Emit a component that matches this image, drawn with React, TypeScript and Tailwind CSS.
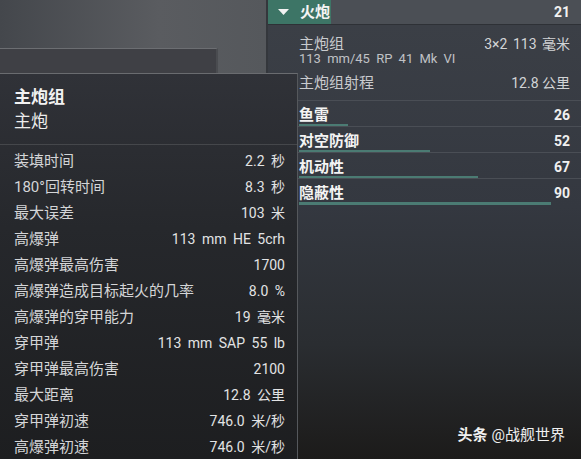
import React from "react";

const rows: [string, string][] = [
  ["装填时间", "2.2 秒"],
  ["180°回转时间", "8.3 秒"],
  ["最大误差", "103 米"],
  ["高爆弹", "113 mm HE 5crh"],
  ["高爆弹最高伤害", "1700"],
  ["高爆弹造成目标起火的几率", "8.0 %"],
  ["高爆弹的穿甲能力", "19 毫米"],
  ["穿甲弹", "113 mm SAP 55 lb"],
  ["穿甲弹最高伤害", "2100"],
  ["最大距离", "12.8 公里"],
  ["穿甲弹初速", "746.0 米/秒"],
  ["高爆弹初速", "746.0 米/秒"],
];

const stats: [string, string, number][] = [
  ["鱼雷", "26", 49],
  ["对空防御", "52", 131],
  ["机动性", "67", 179],
  ["隐蔽性", "90", 252],
];

export default function App() {
  return (
    <div className="relative flex h-[459px] w-[581px] overflow-hidden bg-[#2a2c30] font-['Roboto','Noto_Sans_CJK_SC',sans-serif]">
      {/* left background */}
      <div className="flex h-full w-[266px] flex-col bg-[linear-gradient(90deg,#44474c,#5a5c60_60%,#55585c)]">
        <div className="mt-[48px] h-[25px] w-[218px] border-t border-r-2 border-t-[#6c6e72] border-r-[#4a4c50] bg-[#3f4045]" />
      </div>

      {/* right panel */}
      <div className="flex flex-1 flex-col border-l-2 border-[#34373c] bg-[linear-gradient(180deg,#3c4047,#343840_45%,#2a2d31_75%,#1c1b1a)]">
        <div className="flex h-[25px] items-center border-b border-[#2e3136] bg-[#4b4f55] pr-[11px]">
          <div className="flex h-full w-[63px] items-center bg-[#3d7566] pl-[10px]">
            <svg width="11" height="6" viewBox="0 0 11 6">
              <polygon points="0,0 11,0 5.5,6" fill="#f2f2f2" />
            </svg>
            <span className="ml-[11px] text-[15px] font-bold leading-none text-[#f4f4f4]">火炮</span>
          </div>
          <span className="ml-auto text-[14px] font-bold text-[#f2f2f2]">21</span>
        </div>

        <div className="flex flex-col border-b border-[#4a4e55] pb-[5px] pl-[31px] pr-[11px] pt-[11px]">
          <div className="flex items-start justify-between">
            <div className="flex flex-col">
              <span className="text-[15px] leading-[16px] text-[#c9cbce]">主炮组</span>
              <span className="text-[13px] leading-[14px] text-[#c0c2c5] [word-spacing:3px]">113 mm/45 RP 41 Mk VI</span>
            </div>
            <span className="text-[14px] leading-[16px] text-[#d2d4d6] [word-spacing:2px]">3×2 113 毫米</span>
          </div>
          <div className="mt-[5px] flex h-[24px] items-center justify-between">
            <span className="text-[15px] text-[#c9cbce]">主炮组射程</span>
            <span className="text-[14px] text-[#d2d4d6]">12.8 公里</span>
          </div>
        </div>

        {stats.map(([label, val, w], i) => (
          <div
            key={label}
            className={`flex h-[26px] flex-col pl-[31px] pr-[11px] pt-[5px] ${i < 3 ? "border-b border-[#4a4e55]" : ""}`}
          >
            <div className="flex h-[18px] items-center justify-between">
              <span className="text-[15px] font-bold text-[#f4f4f4]">{label}</span>
              <span className="text-[14px] font-bold text-[#f0f0f0]">{val}</span>
            </div>
            <div className="h-[3px] bg-[#4b7b73]" style={{ width: w }} />
          </div>
        ))}
      </div>

      {/* tooltip */}
      <div className="absolute left-0 top-[73px] flex h-[386px] w-[298px] flex-col border-r border-t border-r-[#55585c] border-t-[#6a6c70] bg-[linear-gradient(180deg,#303238,#26282c_40%,#1d1e20)]">
        <div className="flex flex-col border-b border-[#45474b] pb-[11px] pl-[14px] pt-[11px]">
          <span className="text-[17px] font-bold leading-[24px] text-[#f2f2f2]">主炮组</span>
          <span className="text-[17px] leading-[24px] text-[#ececec]">主炮</span>
        </div>
        <div className="flex flex-col pl-[14px] pr-[12px] pt-[3px]">
          {rows.map(([l, v]) => (
            <div key={l} className="flex h-[26px] items-center justify-between">
              <span className="text-[15px] text-[#d4d5d7]">{l}</span>
              <span className="text-[14px] text-[#e2e3e4] [word-spacing:3px]">{v}</span>
            </div>
          ))}
        </div>
      </div>

      {/* watermark */}
      <div className="absolute bottom-[13px] right-[16px] flex items-center gap-[4px] text-[15px] text-[#f0f0f0]">
        <span className="font-bold">头条</span>
        <span>@战舰世界</span>
      </div>
    </div>
  );
}
